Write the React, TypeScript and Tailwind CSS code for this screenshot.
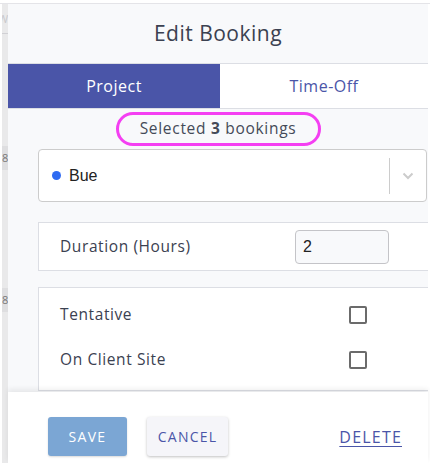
import React from 'react';

const font = { fontFamily: '"Open Sans", "Noto Sans", sans-serif' };

function Checkbox() {
  return <div className="w-[18px] h-[18px] rounded-[2px] border-2 border-[#6b6b6b] bg-white" />;
}

export default function App() {
  return (
    <div className="w-[430px] h-[463px] bg-white overflow-hidden pt-[3px]" style={font}>
      <div className="flex h-[460px] border-t border-[#e4e4e8]">
        {/* background page strip */}
        <div className="w-2 flex flex-col bg-[#e9e9ea] border-l-2 border-white overflow-hidden">
          <div className="h-[30px] border-b border-[#d0d0d4] text-[11px] text-[#c8c8cc] leading-[30px] -ml-[4px]">W</div>
          <div className="h-[112px]" />
          <div className="h-[24px] bg-[#dedee0] text-[11px] text-[#777] leading-[24px]">8</div>
          <div className="h-[118px]" />
          <div className="h-[24px] bg-[#dedee0] text-[11px] text-[#777] leading-[24px]">8</div>
        </div>

        <div className="w-[420px] flex flex-col bg-[#f8f9fb]">
          <div className="h-[60px] flex items-center justify-center border-b border-[#dcdee4] text-[21px] tracking-[0.5px] text-[#3b4151]">
            Edit Booking
          </div>
          <div className="h-[45px] flex border-b border-[#dcdee4] text-[16px] tracking-[0.5px]">
            <div className="w-[212px] flex items-center justify-center bg-[#4a55a8] text-white">Project</div>
            <div className="flex-1 flex items-center justify-center bg-white text-[#4a55a8]">Time-Off</div>
          </div>
          <div className="h-[40px] flex items-center justify-center">
            <div className="w-[205px] h-[34px] rounded-full border-[3px] border-[#f43ff2] flex items-center justify-center text-[15.5px] tracking-[0.7px] text-[#444a58]">
              Selected&nbsp;<span className="font-bold">3</span>&nbsp;bookings
            </div>
          </div>

          <div className="ml-[30px] w-[389px] h-[53px] rounded-[4px] border border-[#cccccc] bg-white flex items-center">
            <div className="flex-1 flex items-center gap-[8px] pl-[13px]" style={{ fontFamily: '"Liberation Sans", Arial, sans-serif' }}>
              <span className="w-[9px] h-[9px] rounded-full bg-[#2f6bf2]" />
              <span className="text-[16px] text-[#222]">Bue</span>
            </div>
            <div className="w-px h-[36px] bg-[#cccccc]" />
            <div className="w-[36px] flex items-center justify-center">
              <svg width="12" height="8" viewBox="0 0 12 8" fill="none">
                <path d="M1.5 1.5L6 6L10.5 1.5" stroke="#cccccc" strokeWidth="2" />
              </svg>
            </div>
          </div>

          <div className="mt-[20px] ml-[30px] w-[390px] h-[49px] border border-r-0 border-[#dcdee4] bg-white flex items-center">
            <div className="flex-1 pl-[21px] text-[15.5px] tracking-[0.6px] text-[#3b4151]">Duration (Hours)</div>
            <div
              className="mr-[39px] w-[94px] h-[34px] rounded-[4px] border border-[#c4c4c8] bg-[#f8f9fb] flex items-center pl-[7px] text-[16px] text-[#222]"
              style={{ fontFamily: '"Liberation Sans", Arial, sans-serif' }}
            >
              2
            </div>
          </div>

          <div className="mt-[16px] ml-[30px] w-[390px] h-[104px] border border-r-0 border-[#dcdee4] bg-white flex flex-col pt-[13px] gap-[17px] text-[15.5px] tracking-[0.6px] text-[#3b4151]">
            <div className="flex items-center h-[28px] pl-[21px]">
              <div className="flex-1">Tentative</div>
              <div className="mr-[61px]"><Checkbox /></div>
            </div>
            <div className="flex items-center h-[28px] pl-[21px]">
              <div className="flex-1">On Client Site</div>
              <div className="mr-[61px]"><Checkbox /></div>
            </div>
          </div>

          <div className="mt-[1px] flex-1 bg-white shadow-[0_-3px_5px_rgba(0,0,0,0.07)] flex items-start pt-[25px] pl-[40px]">
            <button className="w-[79px] h-[39px] rounded-[3px] bg-[#7ba6d4] text-white text-[14px] tracking-[1.3px] shadow-[0_1px_2px_rgba(0,0,0,0.15)]">
              SAVE
            </button>
            <button className="ml-[20px] w-[81px] h-[39px] rounded-[3px] bg-[#f5f5f9] text-[#4a55a8] text-[14px] tracking-[1.2px] shadow-[0_1px_3px_rgba(0,0,0,0.25)]">
              CANCEL
            </button>
            <div className="ml-auto mr-[26px] h-[39px] flex items-center text-[16px] tracking-[1.2px] text-[#4a55a8] underline underline-offset-[3px]">
              DELETE
            </div>
          </div>
        </div>
      </div>
    </div>
  );
}
